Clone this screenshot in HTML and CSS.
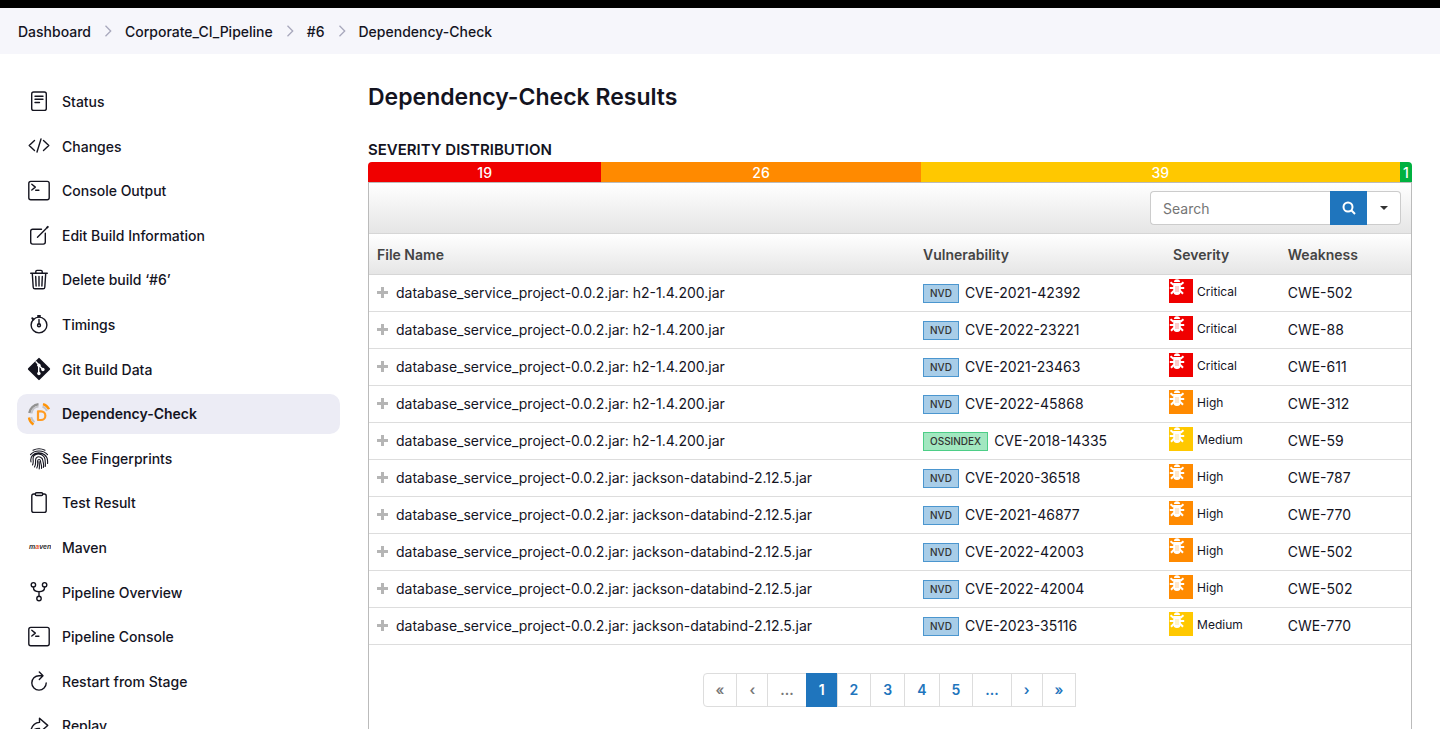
FILE: index.html
```html
<!DOCTYPE html>
<html lang="en">
<head>
<meta charset="utf-8">
<title>Dependency-Check Results</title>
<link rel="stylesheet" href="styles.css">
</head>
<body>
<svg class="sprite" aria-hidden="true">
  <symbol id="bug" viewBox="0 0 24 24">
    <path d="M5 3a3 2.800 0 0 1 6 0z" fill="#fff"/>
    <path d="M4.200 4H11.800V12a3.800 4 0 0 1-7.600 0z" fill="#fff"/>
    <path d="M1.500 3.200L4.500 5.800M14.500 3.200L11.500 5.800M.8 9H5M15.200 9H11M2 14.800L5 11.600M14 14.800L11 11.600" stroke="#fff" stroke-width="2" fill="none"/>
    <path d="M7 7V13M9 7V13" stroke="currentColor" stroke-opacity=".4" stroke-width="1" fill="none"/>
  </symbol>
  <symbol id="console" viewBox="0 0 24 24">
    <rect x="1.800" y="2.400" width="20.400" height="18.400" rx="2"/>
    <path d="M4.800 5.200l3.500 2.900-3.500 2.900M8.700 11.200h3.200"/>
  </symbol>
  <symbol id="chevron" viewBox="0 0 12 12"><path d="M3.500 .8L8.700 6l-5.200 5.200" fill="none" stroke="#a8a8bc" stroke-width="1.300"/></symbol>
</svg>
<div class="page">
  <nav class="breadcrumbs" aria-label="Breadcrumb">
    <a href="#">Dashboard</a><svg><use href="#chevron"/></svg>
    <a href="#">Corporate_CI_Pipeline</a><svg><use href="#chevron"/></svg>
    <a href="#">#6</a><svg><use href="#chevron"/></svg>
    <a href="#">Dependency-Check</a>
  </nav>
  <div class="layout">
    <nav class="sidebar" aria-label="Build">
      <a href="#"><svg viewBox="0 0 24 24"><rect x="4.700" y="2" width="14.600" height="18.400" rx="2"/><path d="M8 6.200h8M8 9.300h8M8 12.500h4.500"/></svg>Status</a>
      <a href="#"><svg viewBox="0 0 24 24"><path d="M7.500 6.500l-5.300 5 5.300 5M16.500 6.500l5.300 5-5.300 5M14 5l-4 13"/></svg>Changes</a>
      <a href="#"><svg><use href="#console"/></svg>Console Output</a>
      <a href="#"><svg viewBox="0 0 24 24"><path d="M14.500 5.300H5.700a2 2 0 0 0-2 2v10.800a2 2 0 0 0 2 2h10.600a2 2 0 0 0 2-2V9.300M10.500 13.300l8.500-8.600"/><path d="M19.800 3.900l1-1" stroke-width="2"/></svg>Edit Build Information</a>
      <a href="#"><svg viewBox="0 0 24 24"><path d="M5.300 5.500l.9 13.700a1.700 1.700 0 0 0 1.700 1.600h8.200a1.700 1.700 0 0 0 1.700-1.600l.9-13.700M3.700 5.300h16.600M8.800 5.200V3.600a1.200 1.200 0 0 1 1.200-1.200h4a1.200 1.200 0 0 1 1.200 1.200v1.600M12 8.500v9.500M8.700 8.500l.4 9.500M15.300 8.500l-.4 9.500"/></svg>Delete build ‘#6’</a>
      <a href="#"><svg viewBox="0 0 24 24"><circle cx="12" cy="12" r="7.900"/><path d="M12 4V2.600M12 6.500v5"/><circle cx="12" cy="12.300" r="1.500"/><path d="M11 3h2M5.300 5.300l1.200 1.200" stroke-width="2"/></svg>Timings</a>
      <a href="#"><svg viewBox="0 0 24 24"><path d="M12 1.800L22.200 12 12 22.200 1.800 12z" fill="#14141f" stroke-width="1.800" stroke-linejoin="round"/><path d="M9 4.800l2.700 3V16M12 8.600l3.700 3.600" stroke="#fff"/><g fill="#fff" stroke="none"><circle cx="11.900" cy="8.300" r="1.700"/><circle cx="11.900" cy="16.500" r="1.700"/><circle cx="15.900" cy="12.500" r="1.700"/></g></svg>Git Build Data</a>
      <a href="#" class="active" aria-current="page"><svg viewBox="0 0 24 24"><g stroke-width="2.400" stroke-linecap="butt"><path d="M2.300 11A10.300 10.300 0 0 1 11.500 2.300" stroke="#929292"/><path d="M4.500 11.500a7.800 7.800 0 0 1 7-7" stroke="#c3c3c7" stroke-width="2"/><path d="M16 2.200a10 10 0 0 1 6 5" stroke="#ff9408"/><path d="M15.500 4.500a8 8 0 0 1 4.500 4.300" stroke="#c3c3c7" stroke-width="2"/><path d="M2 15.500a10 10 0 0 0 4.500 7" stroke="#ff9408"/><path d="M4.200 15a8 8 0 0 0 3.300 5.200" stroke="#c3c3c7" stroke-width="2"/></g><path d="M11 9.300h3a4.200 4.200 0 0 1 0 8.700h-3z" stroke="#ff9b22" stroke-width="2.200"/></svg>Dependency-Check</a>
      <a href="#"><svg viewBox="0 0 24 24" class="thin"><path d="M6 3.200Q12 .3 18 3.200M3.500 7.600C7.500 2.700 16.500 2.700 20.500 7.600M4 15C1.500 3.400 20.300 2.600 20.600 14v2.500M5.500 18c2-4-.8-6.500 1.500-9.300C11 4.800 18.200 7.700 18.200 14c0 2 .5 4 0 5.500M7.500 20c2.300-4 0-7 1.800-9.200 2.700-2.300 6.400-.3 6.600 3 .1 2 1.300 3 .5 6.700M9.800 21c1.500-3 .8-5.500.8-7 .2-2 2.700-2 2.900 0 .3 3.600 1.500 4.500 1 7.500M12.200 22c.5-2.200.1-4.500-.1-7.500"/></svg>See Fingerprints</a>
      <a href="#"><svg viewBox="0 0 24 24"><rect x="4.800" y="3" width="14.400" height="18.400" rx="2"/><rect x="8.300" y="1.800" width="7.400" height="2.700" rx="1.200" fill="#fff"/></svg>Test Result</a>
      <a href="#"><svg viewBox="0 0 24 24"><text x="2" y="13" class="maven">m<tspan fill="#e8552d">a</tspan>ven</text></svg>Maven</a>
      <a href="#"><svg viewBox="0 0 24 24"><circle cx="6.400" cy="4.800" r="2.200"/><circle cx="17.600" cy="4.800" r="2.200"/><circle cx="12" cy="18.500" r="2.200"/><path d="M6.400 7.200c0 3 1.800 4.500 5.600 4.500s5.600-1.500 5.600-4.500M12 11.700v4.500"/></svg>Pipeline Overview</a>
      <a href="#"><svg><use href="#console"/></svg>Pipeline Console</a>
      <a href="#"><svg viewBox="0 0 24 24"><path d="M15.500 5.700H12a7.200 7.200 0 1 0 7.200 7.200M12.300 2L16 5.700l-3.700 3.700"/></svg>Restart from Stage</a>
      <a href="#"><svg viewBox="0 0 24 24"><path d="M12.500 4.200l8.200 7.200-8.200 7.300v-4.200C8.500 14.500 5.800 15.500 3.500 18.700 4.200 13 7 8.700 12.500 8.400z"/></svg>Replay</a>
    </nav>
    <main>
      <h1>Dependency-Check Results</h1>
      <h2>SEVERITY DISTRIBUTION</h2>
      <div class="distribution">
        <div class="critical" style="flex-grow:19">19</div>
        <div class="high" style="flex-grow:26">26</div>
        <div class="medium" style="flex-grow:39">39</div>
        <div class="low" style="flex-grow:1">1</div>
      </div>
      <section class="panel">
        <form class="toolbar">
          <input type="text" placeholder="Search" aria-label="Search">
          <button type="button" class="search" aria-label="Run search"><svg viewBox="0 0 14 14"><circle cx="6" cy="6" r="4.500"/><path d="M9.300 9.300l3.700 3.700"/></svg></button>
          <button type="button" class="options" aria-label="Search options"><svg viewBox="0 0 8 4"><path d="M0 0h8L4 4z"/></svg></button>
        </form>
        <table>
          <colgroup><col class="c-file"><col class="c-vuln"><col class="c-sev"><col class="c-weak"></colgroup>
          <thead><tr><th>File Name</th><th>Vulnerability</th><th>Severity</th><th>Weakness</th></tr></thead>
          <tbody id="rows"></tbody>
        </table>
        <nav class="pagination" aria-label="Pages">
          <a class="off" href="#">«</a><a class="off" href="#">‹</a><a class="off" href="#">...</a><a class="current" href="#" aria-current="page">1</a><a href="#">2</a><a href="#">3</a><a href="#">4</a><a href="#">5</a><a href="#">...</a><a href="#">›</a><a href="#">»</a>
        </nav>
      </section>
    </main>
  </div>
</div>
<script src="rows.js"></script>
</body>
</html>
```
FILE: rows.js
```js
const h2 = "h2-1.4.200.jar";
const jackson = "jackson-databind-2.12.5.jar";
const findings = [
  [h2, "NVD", "CVE-2021-42392", "Critical", "CWE-502"],
  [h2, "NVD", "CVE-2022-23221", "Critical", "CWE-88"],
  [h2, "NVD", "CVE-2021-23463", "Critical", "CWE-611"],
  [h2, "NVD", "CVE-2022-45868", "High", "CWE-312"],
  [h2, "OSSINDEX", "CVE-2018-14335", "Medium", "CWE-59"],
  [jackson, "NVD", "CVE-2020-36518", "High", "CWE-787"],
  [jackson, "NVD", "CVE-2021-46877", "High", "CWE-770"],
  [jackson, "NVD", "CVE-2022-42003", "High", "CWE-502"],
  [jackson, "NVD", "CVE-2022-42004", "High", "CWE-502"],
  [jackson, "NVD", "CVE-2023-35116", "Medium", "CWE-770"]
];
document.getElementById("rows").innerHTML = findings.map(([file, source, cve, severity, cwe]) => `
  <tr>
    <td><div class="cell"><button type="button" class="expand" aria-label="Expand"></button>database_service_project-0.0.2.jar: ${file}</div></td>
    <td><div class="cell"><span class="source ${source.toLowerCase()}">${source}</span>${cve}</div></td>
    <td class="severity"><div class="cell"><svg class="bug ${severity.toLowerCase()}"><use href="#bug"/></svg>${severity}</div></td>
    <td>${cwe}</td>
  </tr>`).join("");
```
FILE: styles.css
```css
* { box-sizing: border-box; }
body {
  margin: 0;
  font-family: Inter, "Liberation Sans", sans-serif;
  font-size: 14px;
  color: #14141f;
  background: #fff;
}
a { color: inherit; text-decoration: none; }
.sprite { display: none; }
.page {
  display: flex;
  flex-direction: column;
  height: 100vh;
  overflow: hidden;
  border-top: 8px solid #000;
}
.breadcrumbs {
  display: flex;
  align-items: center;
  gap: 11px;
  flex: none;
  height: 46px;
  padding: 0 18px;
  background: #f6f6fb;
  font-weight: 500;
}
.breadcrumbs svg { width: 12px; height: 12px; }
.layout { display: flex; gap: 28px; flex: 1; min-height: 0; }
.sidebar {
  display: flex;
  flex-direction: column;
  gap: 5px;
  flex: none;
  width: 340px;
  padding: 28px 0 0 17px;
  line-height: 1.4;
  font-weight: 500;
}
.sidebar a {
  display: flex;
  align-items: center;
  gap: 11px;
  padding: 10px;
  border-radius: 10px;
}
.sidebar .active { background: #ececf5; font-weight: 600; }
.sidebar svg {
  flex: none;
  width: 24px;
  height: 24px;
  margin: -4px 0;
  fill: none;
  stroke: #14141f;
  stroke-width: 1.4;
  stroke-linecap: round;
  stroke-linejoin: round;
}
.sidebar .thin { stroke-width: 1.1; }
.sidebar .maven { font: italic 700 7px "Liberation Sans", sans-serif; fill: #333; stroke: none; }

main { display: flex; flex-direction: column; flex: 1; min-width: 0; padding: 28px 28px 0 0; }
h1 { margin: 0 0 29px; font-size: 23px; line-height: 30px; font-weight: 600; }
h2 { margin: 0 0 3px; font-size: 15px; line-height: 18px; font-weight: 600; }
.distribution {
  display: flex;
  flex: none;
  height: 20px;
  overflow: hidden;
  border-radius: 4px 4px 0 0;
  font-weight: 500;
  line-height: 22px;
  text-align: center;
}
.distribution div { flex-basis: 0; min-width: 0; }
.critical { background: #f00000; color: #f00000; }
.high { background: #ff8a00; color: #ff8a00; }
.medium { background: #ffc800; color: #ffc800; }
.low { background: #00b140; }
.distribution div { color: #fff; }

.panel { flex: 1; border: 1px solid #bbb; border-bottom: 0; }
.toolbar {
  display: flex;
  justify-content: flex-end;
  padding: 8px 10px;
  border-bottom: 1px solid #d6d6d6;
  background: linear-gradient(#fff, #e5e5e5);
}
.toolbar input {
  width: 180px;
  height: 34px;
  padding: 0 12px;
  border: 1px solid #ccc;
  border-right: 0;
  border-radius: 4px 0 0 4px;
  font: inherit;
  background: #fff;
}
.toolbar input::placeholder { color: #757575; }
.toolbar button { display: flex; align-items: center; justify-content: center; padding: 0; height: 34px; }
.search { width: 37px; border: 0; background: #1f75bd; }
.search svg { width: 14px; height: 14px; fill: none; stroke: #fff; stroke-width: 2; }
.options { width: 34px; border: 1px solid #ccc; border-left: 0; border-radius: 0 4px 4px 0; background: #fff; }
.options svg { width: 8px; height: 4px; fill: #333; }

table { width: 100%; table-layout: fixed; border-collapse: separate; border-spacing: 0; }
.c-file { width: 52.4%; }
.c-vuln { width: 24%; }
.c-sev { width: 11%; }
thead { background: linear-gradient(#fff, #e5e5e5); }
th {
  height: 41px;
  padding: 0 8px;
  border-bottom: 1px solid #d6d6d6;
  color: #444;
  font-weight: 600;
  text-align: left;
}
td { height: 37px; padding: 0 8px 1px; border-bottom: 1px solid #ddd; }
td.severity { padding: 0 4px 4px; font-size: 12px; }
.cell { display: flex; align-items: center; }
.expand {
  width: 11px;
  height: 11px;
  margin-right: 8px;
  padding: 0;
  border: 0;
  background: linear-gradient(#b5b5b5, #b5b5b5) center / 11px 3px no-repeat, linear-gradient(#b5b5b5, #b5b5b5) center / 3px 11px no-repeat;
}
.source {
  margin: 2px 6px 0 0;
  padding: 0 6px;
  border: 1px solid #4b96cf;
  background: #a8cde8;
  color: #333;
  font-size: 10px;
  font-weight: 500;
  line-height: 17px;
}
.ossindex { border-color: #4dce87; background: #a2e7c0; }
.bug { width: 24px; height: 24px; margin-right: 4px; }
.severity .cell { color: #14141f; }

.pagination { display: flex; justify-content: center; margin-top: 28px; font-weight: 600; }
.pagination a {
  padding: 6px 12px;
  margin-left: -1px;
  border: 1px solid #ddd;
  line-height: 20px;
  color: #1f75bd;
}
.pagination a:first-child { border-radius: 4px 0 0 4px; }
.pagination .off { color: #777; }
.pagination .current { background: #1f75bd; border-color: #1f75bd; color: #fff; }
```
